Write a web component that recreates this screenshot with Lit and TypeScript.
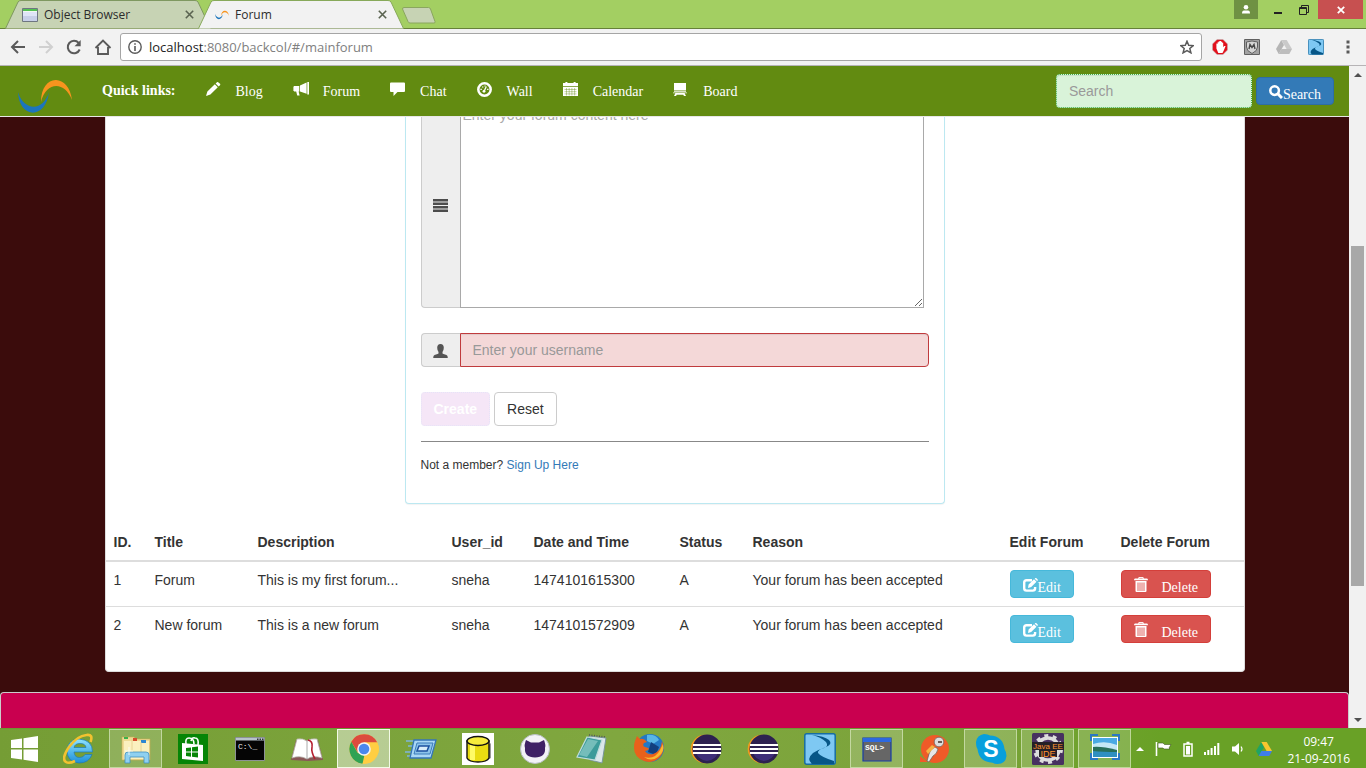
import { LitElement, html, css, svg, TemplateResult } from "lit";
import { customElement, property } from "lit/decorators.js";
import { classMap } from "lit/directives/class-map.js";

const base = css`
  *, *::before, *::after { box-sizing: border-box; }
  button, input, textarea { font: inherit; margin: 0; }
  button { border: 0; background: none; padding: 0; color: inherit; cursor: pointer; }
  svg { display: block; flex: none; }
  a { color: inherit; text-decoration: none; }
`;

const icon = (w: number, h: number, body: unknown, vb = `0 0 ${w} ${h}`): TemplateResult =>
  html`<svg width=${w} height=${h} viewBox=${vb} aria-hidden="true">${body}</svg>`;

/* ---------- site glyphs, drawn on a 14px grid ---------- */
const pencil = () => icon(15, 14, svg`<path fill="currentColor" d="M0 14l1.400-4.400L8.800 2.200l3 3L4.400 12.600zM9.600 1.500L11 .2q.7-.5 1.500.2L14 1.800q.6.700 0 1.400l-1.400 1.300z"/>`);
const horn = () => icon(16, 14, svg`<path fill="currentColor" d="M14.300 0H16v12.500h-1.700zM13.600.4v11.400L7 9.600V3.600zM1 4h5.300v5.400H5.600l1 4.100H4.200L3.200 9.400H1zM0 4.600h.6V9H0z"/>`);
const chat = () => icon(15, 14, svg`<path fill="currentColor" d="M1 .500h13q1 0 1 1v7.500q0 1-1 1H7.500L3.500 14v-4H1Q0 10 0 9V1.500q0-1 1-1z"/>`);
const gauge = () => icon(15, 15, svg`<circle cx="7.500" cy="7.500" r="6.200" fill="none" stroke="currentColor" stroke-width="2.500"/><path d="M7 9.600L9.300 4.500" stroke="currentColor" stroke-width="1.300"/><circle cx="7" cy="9.300" r="1.400" fill="currentColor"/><path fill="currentColor" d="M3.400 6.700h1.400v1.200H3.400zM5 4.400h1.400v1.200H5zM7.400 3.400h1.200v1.200H7.400zM10.100 6.700h1.400v1.200h-1.400z"/>`);
const calendar = () => icon(15, 14, svg`<path fill="currentColor" d="M2.400 0h2v1h6.200V0h2v1H15v3.200H0V1h2.400z"/><path fill="currentColor" d="M0 5h15v9H0z"/><path d="M1.500 7.500h12M1.500 9.700h12M1.500 11.900h12M3.500 6v7.500M6.200 6v7.500M8.900 6v7.500M11.600 6v7.500" stroke="#628b11" stroke-width=".4"/>`);
const board = () => icon(14, 14, svg`<path fill="currentColor" d="M1 1h12v7.500H1zM1 9h12v.8H1zM0 10.400h14v.9H0zM2.500 11h9l1.500 3h-2l-.8-1.300H3.800L3 14H1z"/>`);
const search = () => icon(14, 14, svg`<circle cx="5.600" cy="5.600" r="4.300" fill="none" stroke="currentColor" stroke-width="2.500"/><path d="M8.800 8.800l4.200 4.200" stroke="currentColor" stroke-width="3"/>`);
const edit = () => icon(15, 14, svg`<path fill="none" stroke="currentColor" stroke-width="2.400" d="M9 2.200H3.500q-2.300 0-2.300 2.300v5.800q0 2.300 2.300 2.300h6.300q2.300 0 2.300-2.300V9"/><path fill="currentColor" d="M5 10l.6-3.400L11 1.300l2.500 2.500-5.300 5.300zM11.700.7L12.400 0q.4-.2.800.1l1.500 1.500q.3.400 0 .8l-.6.700z"/>`);
const trash = () => icon(14, 15, svg`<path fill="none" stroke="currentColor" stroke-width="1" d="M4.800 2V.6h4.400V2"/><path fill="currentColor" d="M1 1.600h12q1 .2 1 1.600H0Q0 1.800 1 1.600zM1.500 4h11v10q0 1-1 1h-9q-1 0-1-1z"/><path stroke="#d9534f" stroke-width=".9" d="M4 5.500V14M6 5.500V14M8 5.500V14M10 5.500V14"/>`);
const lines = () => icon(15, 13, svg`<path fill="#4c4c4c" d="M0 0h15v2.400H0zM0 3.500h15v2.400H0zM0 7h15v2.400H0zM0 10.600h15V13H0z"/>`);
const person = () => icon(15, 14, svg`<path fill="#555" d="M7.500 0q3.300 0 3.300 3.800 0 2.400-1.300 4.200v1.200q0 .6 1 .9l3 1q1.300.5 1.300 2.900H.2q0-2.400 1.300-2.900l3-1q1-.3 1-.9V8Q4.200 6.200 4.200 3.800 4.200 0 7.500 0z"/>`);
const swoosh = (w: number, h: number) => icon(w, h, svg`<path fill="#1c75bc" d="M0 12C1 39 28 40 31 12 26 31 6 32 0 12z"/><path fill="#f7941e" d="M23 22C23-7 51-7 54 20 47 1 28 1 23 22z"/>`, "0 0 54 33");

/* ---------- browser glyphs ---------- */
const windowIcon = () => icon(16, 14, svg`<path fill="#dfe5f6" stroke="#6e7681" d="M.5.500h15v13H.5z"/><path fill="#52c152" d="M1 1h14v2H1z"/><path fill="#f3f7f0" d="M1 3h14v1H1z"/><path fill="#b9c2df" d="M1 8h14v5H1z" opacity=".6"/>`);
const cross = (c: string) => icon(9, 9, svg`<path d="M.8.800l7.400 7.400M8.200.800L.8 8.200" stroke=${c} stroke-width="1.600"/>`);
const back = (c: string) => icon(16, 14, svg`<path fill="none" stroke=${c} stroke-width="2" d="M15 7H2.500M8 1L2 7l6 6"/>`);
const forward = (c: string) => icon(16, 14, svg`<path fill="none" stroke=${c} stroke-width="2" d="M1 7h12.500M8 1l6 6-6 6"/>`);
const reload = () => icon(16, 16, svg`<path fill="none" stroke="#5a5a5a" stroke-width="2" d="M13.700 10.500A6.200 6.200 0 1 1 12.700 4"/><path fill="#5a5a5a" d="M14.700 1v6.300H8.500z"/>`);
const home = () => icon(18, 16, svg`<path fill="none" stroke="#5a5a5a" stroke-width="1.900" d="M1.500 9L9 1.500 16.500 9M4 8v7h10V8" stroke-linejoin="miter"/>`);
const info = () => icon(14, 14, svg`<circle cx="7" cy="7" r="6.200" fill="none" stroke="#5a5a5a" stroke-width="1.400"/><path fill="#5a5a5a" d="M6.200 3.200h1.600v1.600H6.200zM6.200 6h1.600v5H6.200z"/>`);
const star = () => icon(14, 14, svg`<path fill="none" stroke="#5a5a5a" stroke-width="1.500" d="M7 1.200l1.700 4.100 4.500.3-3.400 2.900 1.100 4.300L7 10.500l-3.900 2.300 1.100-4.300L.8 5.600l4.500-.3z"/>`);
const blocker = () => icon(16, 16, svg`<path fill="#e2101c" stroke="#b9b9b9" stroke-width=".5" d="M5 .5h6L15.500 5v6L11 15.500H5L.5 11V5z"/><path fill="#fff" d="M4.400 4.500l1.200.2V3.200h1.100V2.200H8V2h1.100v.8h1.100v1h1v4.400l1-1.200h1.400l-1.700 4.200-1.400 2.800H6.300L4.400 9.500z"/>`);
const shield = () => icon(16, 16, svg`<rect width="16" height="16" rx="1" fill="#606060"/><path fill="#a2a2a2" d="M1 1h14v14H1z"/><path fill="#d5d5d5" stroke="#5f5f5f" d="M2.500 3L8 2l5.500 1v5q0 4-5.500 6.500Q2.500 12 2.500 8z"/><path fill="none" stroke="#484848" stroke-width="1.400" d="M5 10l1-4.500 2 3 2-3L11 10"/>`);
const driveIcon = (a: string, b: string, c: string) => icon(16, 14, svg`<path fill=${a} d="M5.300 0L0 9l2.700 5 5.300-9z"/><path fill=${b} d="M5.300 0h5.400L16 9h-5.400z"/><path fill=${c} d="M5.400 9H16l-2.700 5H2.700z"/>`);
const riverArt = svg`<rect x=".8" y=".8" width="30.400" height="30.400" rx="2" fill="#7ec8f3" stroke="#176da3" stroke-width="1.500"/><path fill="#075687" d="M8 2q12 1 17 5 4 4-3 7-9 3-8 6 3 4 16 8v3H8q-6-5 1-11 4-3 11-5 5-2 2-6-5-5-14-7z"/>`;
const dots = () => icon(4, 14, svg`<path fill="#5a5a5a" d="M.5.500h3v3h-3zM.5 5.500h3v3h-3zM.5 10.500h3v3h-3z"/>`);
const arrowUp = (c = "#505050") => icon(8, 4, svg`<path fill=${c} d="M4 0l4 4H0z"/>`);
const arrowDown = () => icon(8, 4, svg`<path fill="#505050" d="M0 0h8L4 4z"/>`);

/* ---------- taskbar pictures, drawn on a 32px grid ---------- */
const eclipse = svg`<circle cx="15" cy="16" r="14.300" fill="#f49a1f"/><circle cx="17" cy="16" r="14.500" fill="#2d2150"/><path fill="#46358a" d="M6 19h22q-2 8-11 9-9-1-11-9z" opacity=".7"/><path stroke="#fff" stroke-width="2" d="M3 12h28M3 16h28M3 20h28"/>`;
const pictures: Record<string, unknown> = {
  ie: svg`<defs><linearGradient id="ieg" x2="0" y2="1"><stop stop-color="#8fe3ff"/><stop offset="1" stop-color="#1e8fd8"/></linearGradient></defs><path fill="url(#ieg)" stroke="#1d78b8" stroke-width=".7" fill-rule="evenodd" d="M29.500 19H11q.5 5.500 5.500 5.500 4 0 5.500-3h7Q26 30 16 30 4.500 29 4 18 4.500 6.500 16 6q13.500 1 13.500 13zM11 14.500h12q-.6-4-5.900-4-5.300 0-6.100 4z"/><path fill="none" stroke="#f2c230" stroke-width="2.600" d="M27.500 9q3-8-4-7Q14 3 6 14-2 26 3 29q3 2 9-1"/>`,
  explorer: svg`<path fill="#eedb94" stroke="#c9ab56" stroke-width=".6" d="M2 4h12l1 2h15v21H2z"/><path fill="#fbf0bf" d="M4 8h25v18H4z"/><path fill="#3ab24a" d="M4 4h4v2H4z"/><path fill="#d64b2c" d="M13 5h4v3h-4z"/><path fill="#2d86d2" d="M21 7h5v3h-5z"/><path stroke="#e4cc8a" stroke-width=".8" d="M12 6v18M21 9v15"/><path fill="#8fd0f0" stroke="#3f8fc0" stroke-width=".8" d="M5 22q0-3 3-3h18q3 0 3 3v8h-5v-6H10v6H5z"/><path stroke="#fff" stroke-width=".8" d="M9 14v8M5 18h8"/>`,
  store: svg`<path fill="#068506" d="M1 1h30v30H1z"/><path fill="#fff" d="M5 10l21 2v16L5 26z"/><path fill="none" stroke="#fff" stroke-width="1.600" d="M9 11q-1-6 3-6 5 0 5 6M14 8q1-4 4-3 4 0 3 7"/><path fill="#068506" d="M9 15l5-.6v4.200H9zM15 14.300l6-.8v5.100h-6zM9 19.500h5v4.200l-5-.6zM15 19.500h6v5l-6-.7z"/>`,
  cmd: svg`<path fill="#050505" stroke="#8c9296" d="M1.500 4.500h29v23h-29z"/><path fill="#b7c2cb" d="M2 5h28v2.500H2z"/><path fill="#333" d="M23 5.500h1.500V7H23zM25.500 5.500H27V7h-1.500zM28 5.500h1.500V7H28z"/><text x="4" y="15.500" font-family="Liberation Mono, monospace" font-size="8" fill="#eee">C:\\_</text>`,
  book: svg`<path fill="#8a5757" d="M0 27L5 7h22l5 20-15 1z"/><path fill="#fff" stroke="#b4b0aa" stroke-width=".8" d="M1 25L6 6q6-1 10 2 4-3 10-2l5 19q-9-3-15 1-7-4-15-1z"/><path stroke="#aaa" d="M16 8v18"/><path fill="none" stroke="#b51f2f" stroke-width="1.600" d="M17 7q5 1 4 7-1 5 3 12"/>`,
  chrome: svg`<circle cx="16" cy="16" r="14.700" fill="#fc4"/><path fill="#dc4b3e" d="M3.300 8.700A14.700 14.700 0 0 1 29.300 9.500H16L9.500 19z"/><path fill="#30a254" d="M3.300 8.700l6.300 11 6.700 3-1.800 8A14.700 14.700 0 0 1 3.300 8.700z"/><path fill="#ffce42" d="M29.300 9.500A14.700 14.700 0 0 1 14.500 30.700l7.300-11Q22 13 16 9.500z"/><circle cx="16" cy="16" r="6.800" fill="#f4f4f4"/><circle cx="16" cy="16" r="5.300" fill="#4a87ee"/>`,
  run: svg`<path stroke="#7fb5db" stroke-width="1.500" d="M1 8h9M3 13h7M0 19h8M2 23h6"/><path fill="#a9d7f5" stroke="#3476b9" stroke-width="1.300" d="M9 7h22l-5 18H5z"/><path fill="#8cc3ea" stroke="#3c7cbc" d="M12 10h16l-3 11H9z"/><path fill="#d9ecfa" stroke="#1b50a0" stroke-width="1.500" d="M14 13h10l-2 5H12z"/>`,
  db: svg`<path fill="#fff" d="M0 0h32v32H0z"/><path fill="#999" d="M8 27q10 5 21-2V10z"/><path fill="#e9dc12" stroke="#111" stroke-width="1.400" d="M5 8v17q2 4 11 4t11-4V8z"/><path fill="#fffb67" d="M8 11v16h5V12z"/><ellipse cx="16" cy="8" rx="11" ry="4.500" fill="#f6ec3c" stroke="#111" stroke-width="1.400"/>`,
  github: svg`<circle cx="16" cy="16" r="14.500" fill="#f2f2f6" stroke="#b8bec4"/><path fill="#3e2165" d="M7 7l5 2.500h8L25 7q2 5 1 8 1 9-10 9.500Q5 24 6 15q-1-3 1-8z"/>`,
  notepad: svg`<path fill="#dbe7ea" stroke="#78969b" d="M13 3l17 2-4 25-12-3z"/><path fill="#3c9b9a" stroke="#bfdcdc" stroke-width="1.200" d="M11 4l15 3-7 20-18-3z"/><path fill="#9bd4d0" d="M12 6l10 2-11 16-8-2z" opacity=".6"/><path stroke="#555" stroke-width="1.500" stroke-dasharray="1 1.500" d="M13 2l17 2"/>`,
  firefox: svg`<circle cx="17" cy="15" r="14" fill="#2378c5"/><path fill="#59b6e6" d="M14 2q9-1 12 5l-6 4-6-3z"/><path fill="#123f7f" d="M18 9l8 5-3 8-8-3z"/><path fill="#e8611b" d="M2 8l2-5 3 3q4-1 7 3l-3 1q-2 3 1 4 4 1 4 2-2 2-4 2 3 4 8 3 6-2 8-8l1-5q4 10-3 17-7 6-15 3Q1 24 1 15q0-5 1-7z"/><path fill="#f9b831" d="M30 11q2 8-5 13-7 5-14 0 11 3 16-7z"/>`,
  eclipse,
  river: riverArt,
  sql: svg`<path fill="#666" stroke="#173ca6" stroke-width="1.200" d="M2 5h28v23H2z"/><path fill="#2c68e0" d="M2 5h28v4H2z"/><text x="4" y="16.500" font-family="Liberation Mono, monospace" font-size="8" font-weight="bold" fill="#fff">SQL&gt;</text>`,
  postman: svg`<circle cx="17" cy="16" r="14" fill="#f05a28"/><path fill="#f05a28" d="M2 23l8 6H2z"/><path fill="#e6e6e6" stroke="#6b5b55" stroke-width=".7" d="M17 14l3 2q-1 5-5 7l-4 6-2-1 2-7q1-5 6-7z"/><path fill="#f6b143" d="M14 12l3 2-7 7-2-3z"/><circle cx="21" cy="9" r="4.800" fill="#ddd" stroke="#6b5b55" stroke-width=".7"/><path stroke="#6b5b55" stroke-width="2" d="M20 9h4"/>`,
  skype: svg`<path fill="#079fdc" d="M9 1q4 0 6 1.500Q28 3 29.500 16q2 3 2 7-1 8-9 8-3 0-5-1.300Q4 29 2.500 16 1 14 1 9q1-7 8-8z"/><text x="16" y="24" text-anchor="middle" font-family="Liberation Sans, sans-serif" font-size="23" font-weight="bold" fill="#fff">S</text>`,
  java: svg`<rect width="32" height="32" rx="1.500" fill="#473160"/><circle cx="16" cy="16" r="11" fill="none" stroke="#ddd" stroke-width="3.500"/><circle cx="16" cy="16" r="13.500" fill="none" stroke="#ddd" stroke-width="3" stroke-dasharray="4 4.500"/><path fill="#252027" d="M0 9h32v8H7v7h18v-7H0z"/><path fill="#252027" d="M7 16h18v8H7z"/><text x="16" y="15.500" text-anchor="middle" font-family="Liberation Sans, sans-serif" font-size="8" fill="#ff9430">Java EE</text><text x="16" y="23.500" text-anchor="middle" font-family="Liberation Sans, sans-serif" font-size="9" fill="#ff9430">IDE</text>`,
  photo: svg`<path fill="#fff" d="M3 4h26v21H3z"/><path fill="#4aa9e4" d="M4 5h24v11H4z"/><path fill="#c4e7f6" d="M4 11q12-4 24 1v5H4z"/><path fill="#286f5b" d="M4 14q8-1 24 3v3H4z"/><path fill="#2f8fc0" d="M4 18q10 1 24 1v5H4z"/><path fill="none" stroke="#2b78c3" stroke-width="2" d="M2 8V2h7M23 2h7v6M2 20v6h7M23 26h7v-6"/>`,
};

@customElement("browser-chrome")
export class BrowserChrome extends LitElement {
  static styles = [base, css`
    :host { display: block; flex: none; font-family: "Open Sans", "Noto Sans", sans-serif; }
    .strip { display: flex; align-items: flex-start; height: 29px; padding-left: 5px; background: #a3cf62; border-bottom: 1px solid #668139; }
    .tab { position: relative; display: flex; align-items: center; width: 206px; height: 29px; padding: 0 17px; font-size: 12px; line-height: 16px; color: #2c2c2c; margin-right: -13px; text-align: left; }
    .tab.on { z-index: 1; }
    .shape { position: absolute; inset: 0; width: 100%; height: 100%; }
    .tab svg:not(.shape), .tab span { position: relative; }
    .tab span { flex: 1; margin-left: 6px; }
    .new { margin: 7px 0 0 10px; }
    .system { margin-left: auto; margin-right: 3px; display: flex; height: 19px; }
    .sys { display: grid; place-items: center; width: 26px; }
    .user { width: 24px; margin-right: 7px; background: #6f9143; }
    .close { width: 45px; margin-left: 1px; background: #c75050; }
    .bar { display: flex; align-items: center; height: 37px; padding: 0 16px 0 10px; background: #f2f2f2; border-bottom: 1px solid #b6b4b6; }
    .history { display: flex; gap: 12px; margin-right: 8px; }
    .address { flex: 1; display: flex; align-items: center; gap: 7px; height: 28px; padding: 0 7px; background: #fff; border: 1px solid #a5a5a5; border-radius: 3px; font-size: 13px; line-height: 20px; color: #808080; }
    .address b { font-weight: 400; color: #222; }
    .address button { margin-left: auto; }
    .extensions { display: flex; align-items: center; gap: 16px; margin-left: 10px; }
    .extensions button:last-child { margin-left: 6px; }
  `];

  private tab(label: string, on: boolean, favicon: TemplateResult) {
    return html`<div class=${classMap({ tab: true, on })}>
      <svg class="shape" viewBox="0 0 206 29" preserveAspectRatio="none" aria-hidden="true">
        <path d="M.5 28.500L13 2Q14 .5 16 .5H190Q192 .5 193 2L205.500 28.500" fill=${on ? "#f2f2f2" : "#c7d3b4"} stroke=${on ? "#87a95a" : "#7f9860"}></path>
      </svg>
      ${favicon}<span>${label}</span><button aria-label="Close ${label}">${cross("#5a6350")}</button>
    </div>`;
  }

  render() {
    return html`
      <div class="strip">
        ${this.tab("Object Browser", false, windowIcon())}
        ${this.tab("Forum", true, swoosh(14, 12))}
        <button class="new" aria-label="New tab">${icon(36, 17, svg`<path fill="#c7d3b4" stroke="#8aa65f" d="M3 .5h24.500q1.500 0 2 1.500l4.500 12.500q.5 1.500-1 1.500H9q-1.500 0-2-1.500L1.500 2Q1.500.5 3 .5z"/>`)}</button>
        <div class="system">
          <button class="sys user" aria-label="Profile">${icon(10, 9, svg`<circle cx="5" cy="2.300" r="2.300" fill="#fff"/><path fill="#fff" d="M1 8.500Q1 5.500 3 5.500h4q2 0 2 3z"/>`)}</button>
          <button class="sys" aria-label="Minimize">${icon(10, 10, svg`<path fill="#222" d="M1 7h8v2H1z"/>`)}</button>
          <button class="sys" aria-label="Restore">${icon(10, 10, svg`<path fill="none" stroke="#222" d="M2.500 2V.5h7v7H8M.5 2.500H7.500v7H.5zM.5 3.500h7"/>`)}</button>
          <button class="sys close" aria-label="Close window">${icon(8, 8, svg`<path stroke="#fff" stroke-width="1.800" d="M.8.800l6.400 6.400M7.200.800L.8 7.200"/>`)}</button>
        </div>
      </div>
      <div class="bar">
        <div class="history">
          <button aria-label="Back">${back("#5a5a5a")}</button>
          <button aria-label="Forward">${forward("#d0d0d0")}</button>
          <button aria-label="Reload">${reload()}</button>
          <button aria-label="Home">${home()}</button>
        </div>
        <div class="address">${info()}<span><b>localhost</b>:8080/backcol/#/mainforum</span><button aria-label="Bookmark">${star()}</button></div>
        <div class="extensions">
          <button aria-label="Blocker">${blocker()}</button>
          <button aria-label="Shield">${shield()}</button>
          <button aria-label="Drive">${driveIcon("#b5b5b5", "#cacaca", "#bdbdbd")}</button>
          <button aria-label="River">${icon(16, 16, riverArt, "0 0 32 32")}</button>
          <button aria-label="Menu">${dots()}</button>
        </div>
      </div>`;
  }
}

@customElement("site-nav")
export class SiteNav extends LitElement {
  static styles = [base, css`
    :host { display: block; position: relative; z-index: 2; flex: none; font: 14px/20px "Liberation Serif", serif; }
    nav { display: flex; align-items: flex-start; min-height: 51px; padding: 0 15px 0 18px; color: #fff; background: #628b11; border-bottom: 1px solid #e7e7e7; }
    .brand { margin: 14px 30px 0 0; }
    .title { padding: 15px 15px 15px 0; }
    .link { display: flex; align-items: flex-start; padding: 16px 15px 14px; }
    .glyph { width: 30px; }
    form { display: flex; align-items: center; gap: 4px; margin: 8px 0 0 auto; }
    input { width: 196px; height: 34px; padding: 6px 12px; font: 14px/20px "Liberation Sans", sans-serif; background: #d9f3d9; border: 1px dotted #3fae49; border-radius: 4px; box-shadow: inset 0 1px 1px rgba(0, 0, 0, .075); }
    input::placeholder { color: #999; opacity: 1; }
    .go { display: flex; align-items: flex-start; height: 28px; padding: 7px 12px 0; background: #337ab7; border: 1px solid #2e6da4; border-radius: 4px; }
  `];
  render() {
    const links: [string, () => TemplateResult][] = [["Blog", pencil], ["Forum", horn], ["Chat", chat], ["Wall", gauge], ["Calendar", calendar], ["Board", board]];
    return html`<nav>
      <a class="brand" href="#/" aria-label="Home">${swoosh(54, 33)}</a>
      <b class="title">Quick links:</b>
      ${links.map(([label, glyph]) => html`<a class="link" href="#/${label.toLowerCase()}"><span class="glyph">${glyph()}</span>${label}</a>`)}
      <form>
        <input type="text" placeholder="Search" aria-label="Search">
        <button type="button" class="go">${search()}Search</button>
      </form>
    </nav>`;
  }
}

@customElement("forum-form")
export class ForumForm extends LitElement {
  static styles = [base, css`
    :host { display: block; font: 14px/20px "Liberation Sans", sans-serif; color: #333; }
    .card { max-width: 540px; margin: 0 auto; padding: 0 15px 29px; background: #fff; border: 1px solid #bce8f1; border-top: 0; border-radius: 4px; box-shadow: 0 1px 1px rgba(0, 0, 0, .05); }
    .group { display: flex; margin-bottom: 25px; }
    .addon { flex: none; display: grid; place-items: center; width: 39px; padding-top: 1px; background: #eee; border: 1px solid #ccc; border-right: 0; border-radius: 4px 0 0 4px; }
    textarea { flex: 1; height: 206px; margin-right: 5px; padding: 2px; line-height: 20px; border: 1px solid #a9a9a9; border-radius: 0; background: #fff; resize: both; outline: 0; }
    textarea::placeholder { color: #a9a9a9; opacity: 1; }
    input { flex: 1; min-width: 0; height: 34px; padding: 6px 12px; background: #f4d8d8; border: 1px solid #c03b3d; border-radius: 0 4px 4px 0; box-shadow: inset 0 1px 1px rgba(0, 0, 0, .075); }
    input::placeholder { color: #999; opacity: 1; }
    .actions { display: flex; gap: 4px; padding-bottom: 15px; border-bottom: 1px solid #888; }
    .btn { height: 34px; padding: 0 12px; border: 1px solid #ccc; border-radius: 4px; background: #fff; color: #333; }
    .create { font-weight: 700; color: #fff; background: #f5e6f7; border: 1px dotted #e6e4f8; }
    .signup { margin: 0; padding-top: 15px; font-size: 12px; line-height: 17px; }
    .signup a { color: #337ab7; }
  `];
  render() {
    return html`<form class="card">
      <div class="group"><label class="addon" for="content">${lines()}</label><textarea id="content" placeholder="Enter your forum content here" aria-label="Forum content"></textarea></div>
      <div class="group"><label class="addon" for="user">${person()}</label><input id="user" type="text" placeholder="Enter your username" aria-label="Username"></div>
      <div class="actions"><button class="btn create" type="button" disabled>Create</button><button class="btn" type="reset">Reset</button></div>
      <p class="signup">Not a member? <a href="#/signup">Sign Up Here</a></p>
    </form>`;
  }
}

interface Post { id: number; title: string; description: string; user: string; time: string; }

@customElement("forum-table")
export class ForumTable extends LitElement {
  @property({ attribute: false }) posts: Post[] = [
    { id: 1, title: "Forum", description: "This is my first forum...", user: "sneha", time: "1474101615300" },
    { id: 2, title: "New forum", description: "This is a new forum", user: "sneha", time: "1474101572909" },
  ];
  static styles = [base, css`
    :host { display: block; font: 14px/20px "Liberation Sans", sans-serif; color: #333; }
    table { width: 100%; table-layout: fixed; border-spacing: 0; }
    th { padding: 8px; text-align: left; border-bottom: 2px solid #ddd; white-space: nowrap; }
    td { padding: 8px; vertical-align: top; }
    tr + tr td { border-top: 1px solid #ddd; }
    .id { width: 41px; }
    .title { width: 103px; }
    .desc { width: 194px; }
    .user { width: 82px; }
    .time { width: 146px; }
    .status { width: 73px; }
    .edit { width: 111px; }
    .delete { width: 131px; }
    .btn { display: flex; align-items: flex-start; height: 28px; padding: 7px 12px 0; border-radius: 4px; color: #fff; font-family: "Liberation Serif", serif; }
    .info { background: #5bc0de; border: 1px solid #46b8da; }
    .danger { gap: 14px; padding-top: 6px; line-height: 22px; background: #d9534f; border: 1px solid #d43f3a; }
  `];
  render() {
    return html`<table>
      <thead><tr><th class="id">ID.</th><th class="title">Title</th><th class="desc">Description</th><th class="user">User_id</th><th class="time">Date and Time</th><th class="status">Status</th><th>Reason</th><th class="edit">Edit Forum</th><th class="delete">Delete Forum</th></tr></thead>
      <tbody>${this.posts.map((p) => html`<tr><td>${p.id}</td><td>${p.title}</td><td>${p.description}</td><td>${p.user}</td><td>${p.time}</td><td>A</td><td>Your forum has been accepted</td><td><button class="btn info">${edit()}Edit</button></td><td><button class="btn danger">${trash()}Delete</button></td></tr>`)}</tbody>
    </table>`;
  }
}

@customElement("task-bar")
export class TaskBar extends LitElement {
  static styles = [base, css`
    :host { display: flex; flex: none; height: 40px; border-top: 1px solid #6f9431; background: linear-gradient(90deg, #759d35, #80a73f 45%, #7ba33a 70%, #69a126 85%, #69a126); font: 12px/17px "Open Sans", "Noto Sans", sans-serif; color: #fff; }
    .start { display: grid; place-items: center; width: 50px; margin-right: 2px; }
    .apps { display: flex; gap: 4px; }
    .app { display: grid; place-items: center; width: 53px; height: 39px; border: 1px solid transparent; }
    .open { background: rgba(255, 255, 255, .18); border-color: rgba(235, 245, 215, .55); }
    .front { background: rgba(255, 255, 255, .45); border-color: rgba(250, 255, 240, .9); }
    .tray { display: flex; align-items: center; gap: 11px; margin-left: auto; }
    .clock { display: flex; flex-direction: column; justify-content: center; text-align: center; white-space: nowrap; padding: 3px 16px 0 4px; }
  `];
  render() {
    const apps = ["ie", "explorer", "store", "cmd", "book", "chrome", "run", "db", "github", "notepad", "firefox", "eclipse", "eclipse", "river", "sql", "postman", "skype", "java", "photo"];
    const open = ["explorer", "sql", "skype", "java", "photo"];
    return html`
      <button class="start" aria-label="Start">${icon(28, 26, svg`<path fill="#fff" d="M0 4l11-1.600V12H0zM12.500 2.200L27 0v12H12.500zM0 13.500h11V23.500L0 22zM12.500 13.500H27V26L12.500 23.800z"/>`)}</button>
      <div class="apps">${apps.map((a) => html`<button class=${classMap({ app: true, open: open.includes(a), front: a === "chrome" })} aria-label=${a}>${icon(32, 32, pictures[a])}</button>`)}</div>
      <div class="tray">
        ${arrowUp("#fff")}
        ${icon(17, 16, svg`<path stroke="#fff" stroke-width="1.600" d="M1.500 1v14"/><path fill="#fff" stroke="#3e5520" stroke-width=".6" d="M3 2h5l1.500 1.500H16l-2 3.500 1 1H9L8 7H3z"/>`)}
        ${icon(10, 16, svg`<path fill="none" stroke="#fff" stroke-width="1.500" d="M1 3h8v12H1zM3.500 1.500h3"/><path fill="#fff" d="M3 5h4v8.500H3z"/>`)}
        ${icon(16, 12, svg`<path fill="#fff" d="M0 9h2v3H0zM3.300 7h2v5h-2zM6.600 5h2v7h-2zM10 3h2v9h-2zM13.300 0h2v12h-2z"/>`)}
        ${icon(14, 14, svg`<path fill="#fff" d="M1 4.500h3L8 1v12L4 9.500H1z"/><path fill="none" stroke="#fff" stroke-width="1.200" d="M10 4.500q2 2.500 0 5"/>`)}
        ${driveIcon("#1fa463", "#f8c62f", "#3f7de8")}
        <div class="clock"><span>09:47</span><span>21-09-2016</span></div>
      </div>`;
  }
}

@customElement("app-root")
export class AppRoot extends LitElement {
  static styles = [base, css`
    :host { display: flex; flex-direction: column; height: 100vh; overflow: hidden; }
    .view { flex: 1; display: flex; min-height: 0; background: #f1f1f1; }
    .page { flex: 1; display: flex; flex-direction: column; min-width: 0; overflow: hidden; background: #3b0c0c; }
    .content { flex: 1; display: flex; flex-direction: column; margin-top: -15px; min-height: 0; }
    .panel { width: calc(100% - 40px); max-width: 1140px; margin: 0 auto 20px; padding-bottom: 20px; background: #fff; border: 1px solid #ddd; border-top: 0; border-radius: 4px; }
    .panel forum-form { margin-bottom: 20px; }
    footer { flex: 1; background: #c9004f; border: 1px solid #ccc; border-bottom: 0; border-radius: 4px 4px 0 0; }
    .scroll { display: flex; flex-direction: column; align-items: center; width: 17px; }
    .end { flex: none; display: grid; place-items: center; height: 17px; }
    .before { flex: 163; }
    .thumb { flex: 340; width: 13px; background: #a8a8a8; }
    .after { flex: 125; }
  `];
  render() {
    return html`
      <browser-chrome></browser-chrome>
      <div class="view">
        <div class="page">
          <site-nav></site-nav>
          <div class="content">
            <main class="panel"><forum-form></forum-form><forum-table></forum-table></main>
            <footer></footer>
          </div>
        </div>
        <div class="scroll" aria-hidden="true"><div class="end">${arrowUp()}</div><div class="before"></div><div class="thumb"></div><div class="after"></div><div class="end">${arrowDown()}</div></div>
      </div>
      <task-bar></task-bar>`;
  }
}
